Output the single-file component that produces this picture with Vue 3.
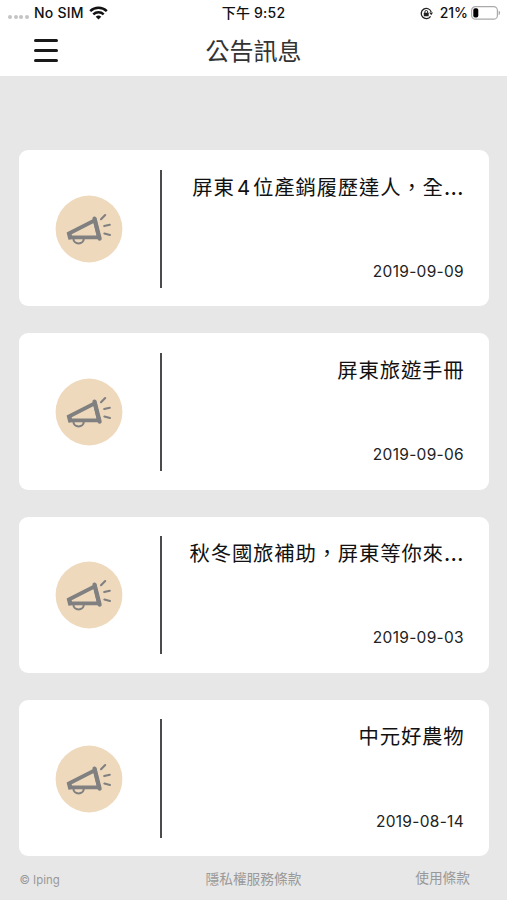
<script setup>
  const notices = [
    { title: '屏東 4 位產銷履歷達人，全', clipped: true, date: '2019-09-09' },
    { title: '屏東旅遊手冊', clipped: false, date: '2019-09-06' },
    { title: '秋冬國旅補助，屏東等你來', clipped: true, date: '2019-09-03' },
    { title: '中元好農物', clipped: false, date: '2019-08-14' }
  ];
</script>

<template>
  <div class="screen">
    <header>
      <div class="status-bar">
        <div class="carrier">
          <span class="signal"><i v-for="n in 4" :key="n"></i></span>
          <span class="sim">No SIM</span>
          <svg class="wifi" width="19" height="14" viewBox="0 0 19 14" fill="none" stroke="#111" stroke-width="2.5">
            <path d="M1.2 5.2a12 12 0 0 1 16.6 0" />
            <path d="M4.3 8.4a7.6 7.6 0 0 1 10.4 0" />
            <path d="M9.5 13.5 6.7 10.7a4.2 4.2 0 0 1 5.6 0z" fill="#111" stroke="none" />
          </svg>
        </div>
        <div class="time">下午 9:52</div>
        <div class="power">
          <svg class="lock" width="13" height="13" viewBox="0 0 13 13" fill="none" stroke="#222">
            <path d="M10.6 9.3A5.1 5.1 0 1 1 11.2 5" stroke-width="1.3" />
            <path d="M9.2 5.4h3.8l-1.8 2.8z" fill="#222" stroke="none" />
            <rect x="3.8" y="5.8" width="4.9" height="3.5" rx=".5" fill="#222" stroke="none" />
            <path d="M4.9 6V4.9a1.4 1.4 0 0 1 2.8 0V6" />
          </svg>
          <span>21%</span>
          <svg class="battery" width="30" height="14" viewBox="0 0 30 14">
            <rect x=".6" y=".6" width="25.8" height="12.6" rx="3.8" fill="#fff" stroke="#aaa" stroke-width="1.2" />
            <rect x="2.3" y="2.3" width="5" height="9.2" rx="1.8" fill="#000" />
            <path d="M27.6 4.8c2 .7 2 3.6 0 4.4z" fill="#aaa" />
          </svg>
        </div>
      </div>
      <div class="nav-bar">
        <button class="menu" aria-label="選單"><i></i><i></i><i></i></button>
        <h1>公告訊息</h1>
      </div>
    </header>

    <main>
      <article v-for="notice in notices" :key="notice.date" class="notice">
        <div class="notice-icon">
          <svg width="68" height="68" viewBox="0 0 68 68" fill="none" stroke="#808080">
            <circle cx="34" cy="34" r="33.4" fill="#eed9bd" stroke="none" />
            <path d="M14.4 38.2 39.8 25.4 43.9 42.4 15.5 42.4z" stroke-width="3.8" />
            <path d="M39.5 23.6 44.6 43.6" stroke-width="4.2" stroke-linecap="round" />
            <path d="M13.6 37 15.4 44.4" stroke-width="4" />
            <path d="M18.4 43.6a5.2 4.9 0 0 0 10.4 0" stroke-width="2.1" />
            <path d="M46 24.2 50.2 20M49.2 31.1 54.8 29.7M49.4 38.5 55 40" stroke-width="2.1" stroke-linecap="round" />
          </svg>
        </div>
        <div class="notice-body">
          <h2>{{ notice.title }}<span v-if="notice.clipped" class="dots">…</span></h2>
          <time>{{ notice.date }}</time>
        </div>
      </article>
    </main>

    <footer>
      <span class="copyright">© Iping</span>
      <span class="privacy">隱私權服務條款</span>
      <span class="terms">使用條款</span>
    </footer>
  </div>
</template>

<style>
  body {
    margin: 0;
    background: #e7e7e7;
  }
</style>

<style scoped>
  .screen {
    width: 507px;
    height: 900px;
    overflow: hidden;
    display: flex;
    flex-direction: column;
    background: #e7e7e7;
    color: #111;
    font-family: Inter, "Noto Sans CJK TC", sans-serif;
  }

  header {
    height: 75.5px;
    flex: none;
    background: #fff;
  }
  .status-bar {
    height: 26px;
    display: grid;
    grid-template-columns: 1fr auto 1fr;
    align-items: center;
    font-size: 14px;
    line-height: 26px;
    font-weight: 500;
  }
  .carrier, .power, .signal {
    display: flex;
    align-items: center;
  }
  .carrier {
    padding-left: 8px;
  }
  .signal {
    gap: 1.7px;
    padding-top: 8px;
  }
  .signal i {
    width: 4px;
    height: 4px;
    border-radius: 50%;
    background: #c4c4c4;
  }
  .sim {
    margin: 0 5px 0 5px;
    letter-spacing: 0.2px;
  }
  .time {
    white-space: nowrap;
    letter-spacing: 0.2px;
  }
  .power {
    justify-content: flex-end;
    padding-right: 6px;
  }
  .lock {
    margin-right: 7px;
  }
  .battery {
    margin-left: 3px;
  }

  .nav-bar {
    height: 49px;
    display: grid;
    grid-template-columns: 1fr auto 1fr;
    align-items: center;
  }
  .menu {
    width: 24px;
    margin-left: 34px;
    padding: 0;
    border: 0;
    background: none;
    display: flex;
    flex-direction: column;
    gap: 7px;
  }
  .menu i {
    height: 2.8px;
    border-radius: 2px;
    background: #1a1a1a;
  }
  h1 {
    margin: 2px 0 0;
    font-size: 24px;
    line-height: 36px;
    font-weight: 400;
    color: #333;
  }

  main {
    display: flex;
    flex-direction: column;
    gap: 27px;
    padding: 74.5px 18.5px 0 19.3px;
  }
  .notice {
    height: 156.3px;
    box-sizing: border-box;
    display: flex;
    padding: 19.5px 24.5px 18.5px 0;
    border-radius: 9px;
    background: #fff;
  }
  .notice-icon {
    width: 142.4px;
    box-sizing: border-box;
    flex: none;
    display: flex;
    align-items: center;
    justify-content: center;
    border-right: 2px solid #4b4b4d;
  }
  .notice-body {
    flex: 1;
    min-width: 0;
    display: flex;
    flex-direction: column;
    justify-content: space-between;
    align-items: flex-end;
  }
  h2 {
    margin: 3px -0.5px 0 0;
    font-size: 20.4px;
    line-height: 30px;
    font-weight: 400;
    letter-spacing: 0.8px;
    word-spacing: -4.3px;
    white-space: nowrap;
    color: #111;
  }
  .dots {
    font-size: 23px;
    line-height: 1;
  }
  time {
    margin-bottom: 6px;
    font-size: 15.5px;
    line-height: 20px;
    letter-spacing: 0.3px;
    color: #222;
  }

  footer {
    flex: 1;
    display: grid;
    grid-template-columns: 186px 1fr auto;
    align-items: center;
    padding: 0 37px 0 19.5px;
    font-size: 13.7px;
    color: #999;
  }
  .copyright {
    padding-top: 4px;
    font-size: 11.4px;
  }
  .terms {
    padding-bottom: 2px;
  }
</style>
